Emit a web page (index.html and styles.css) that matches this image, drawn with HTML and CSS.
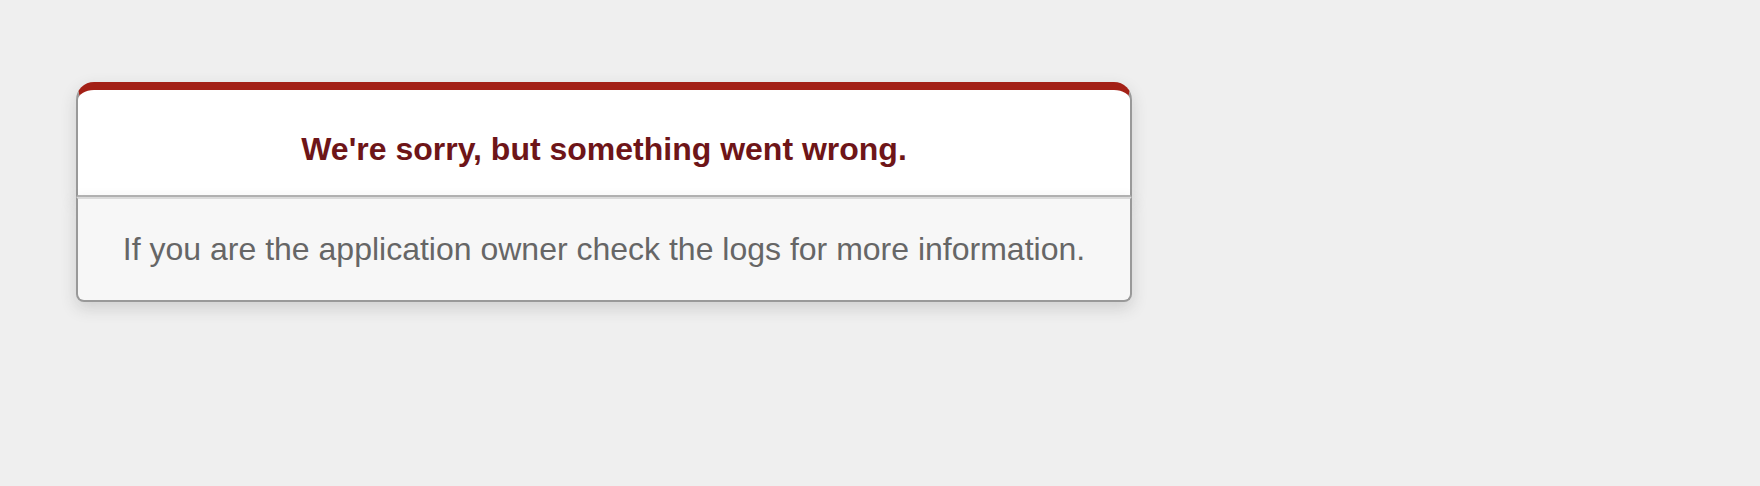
FILE: index.html
```html
<!DOCTYPE html>
<html>
<head>
<meta charset="utf-8">
<title>We're sorry, but something went wrong (500)</title>
<link rel="stylesheet" href="styles.css">
</head>
<body class="rails-default-error-page">
  <div class="dialog">
    <div class="dialog-head">
      <h1 class="title">We're sorry, but something went wrong.</h1>
    </div>
    <p class="note">If you are the application owner check the logs for more information.</p>
  </div>
</body>
</html>
```

FILE: styles.css
```css
html, body {
  margin: 0;
  padding: 0;
}

.rails-default-error-page {
  background-color: #EFEFEF;
  color: #2E2F30;
  text-align: center;
  font-family: "Liberation Sans", Arial, sans-serif;
  font-size: 32px;
  margin: 0;
  min-height: 486px;
}

.dialog {
  width: 1056px;
  margin: 82px 0 0 76px;
}

.dialog-head {
  border: 2px solid #CCC;
  border-right-color: #999;
  border-left-color: #999;
  border-bottom-color: #B5B5B5;
  border-top: #A32016 solid 8px;
  border-top-left-radius: 18px;
  border-top-right-radius: 18px;
  background-color: #fff;
  padding: 14px 12% 0;
  box-shadow: 0 6px 16px rgba(50, 50, 50, 0.17);
}

.title {
  font-size: 100%;
  color: #6E1518;
  line-height: 1.5em;
  margin: 0.67em 0;
  font-weight: bold;
}

.note {
  margin: 0 0 1em;
  padding: 1em;
  background-color: #F7F7F7;
  border: 2px solid #CCC;
  border-right-color: #999;
  border-left-color: #999;
  border-bottom-color: #999;
  border-bottom-left-radius: 8px;
  border-bottom-right-radius: 8px;
  border-top-color: #DADADA;
  color: #666;
  box-shadow: 0 6px 16px rgba(50, 50, 50, 0.17);
}
```
